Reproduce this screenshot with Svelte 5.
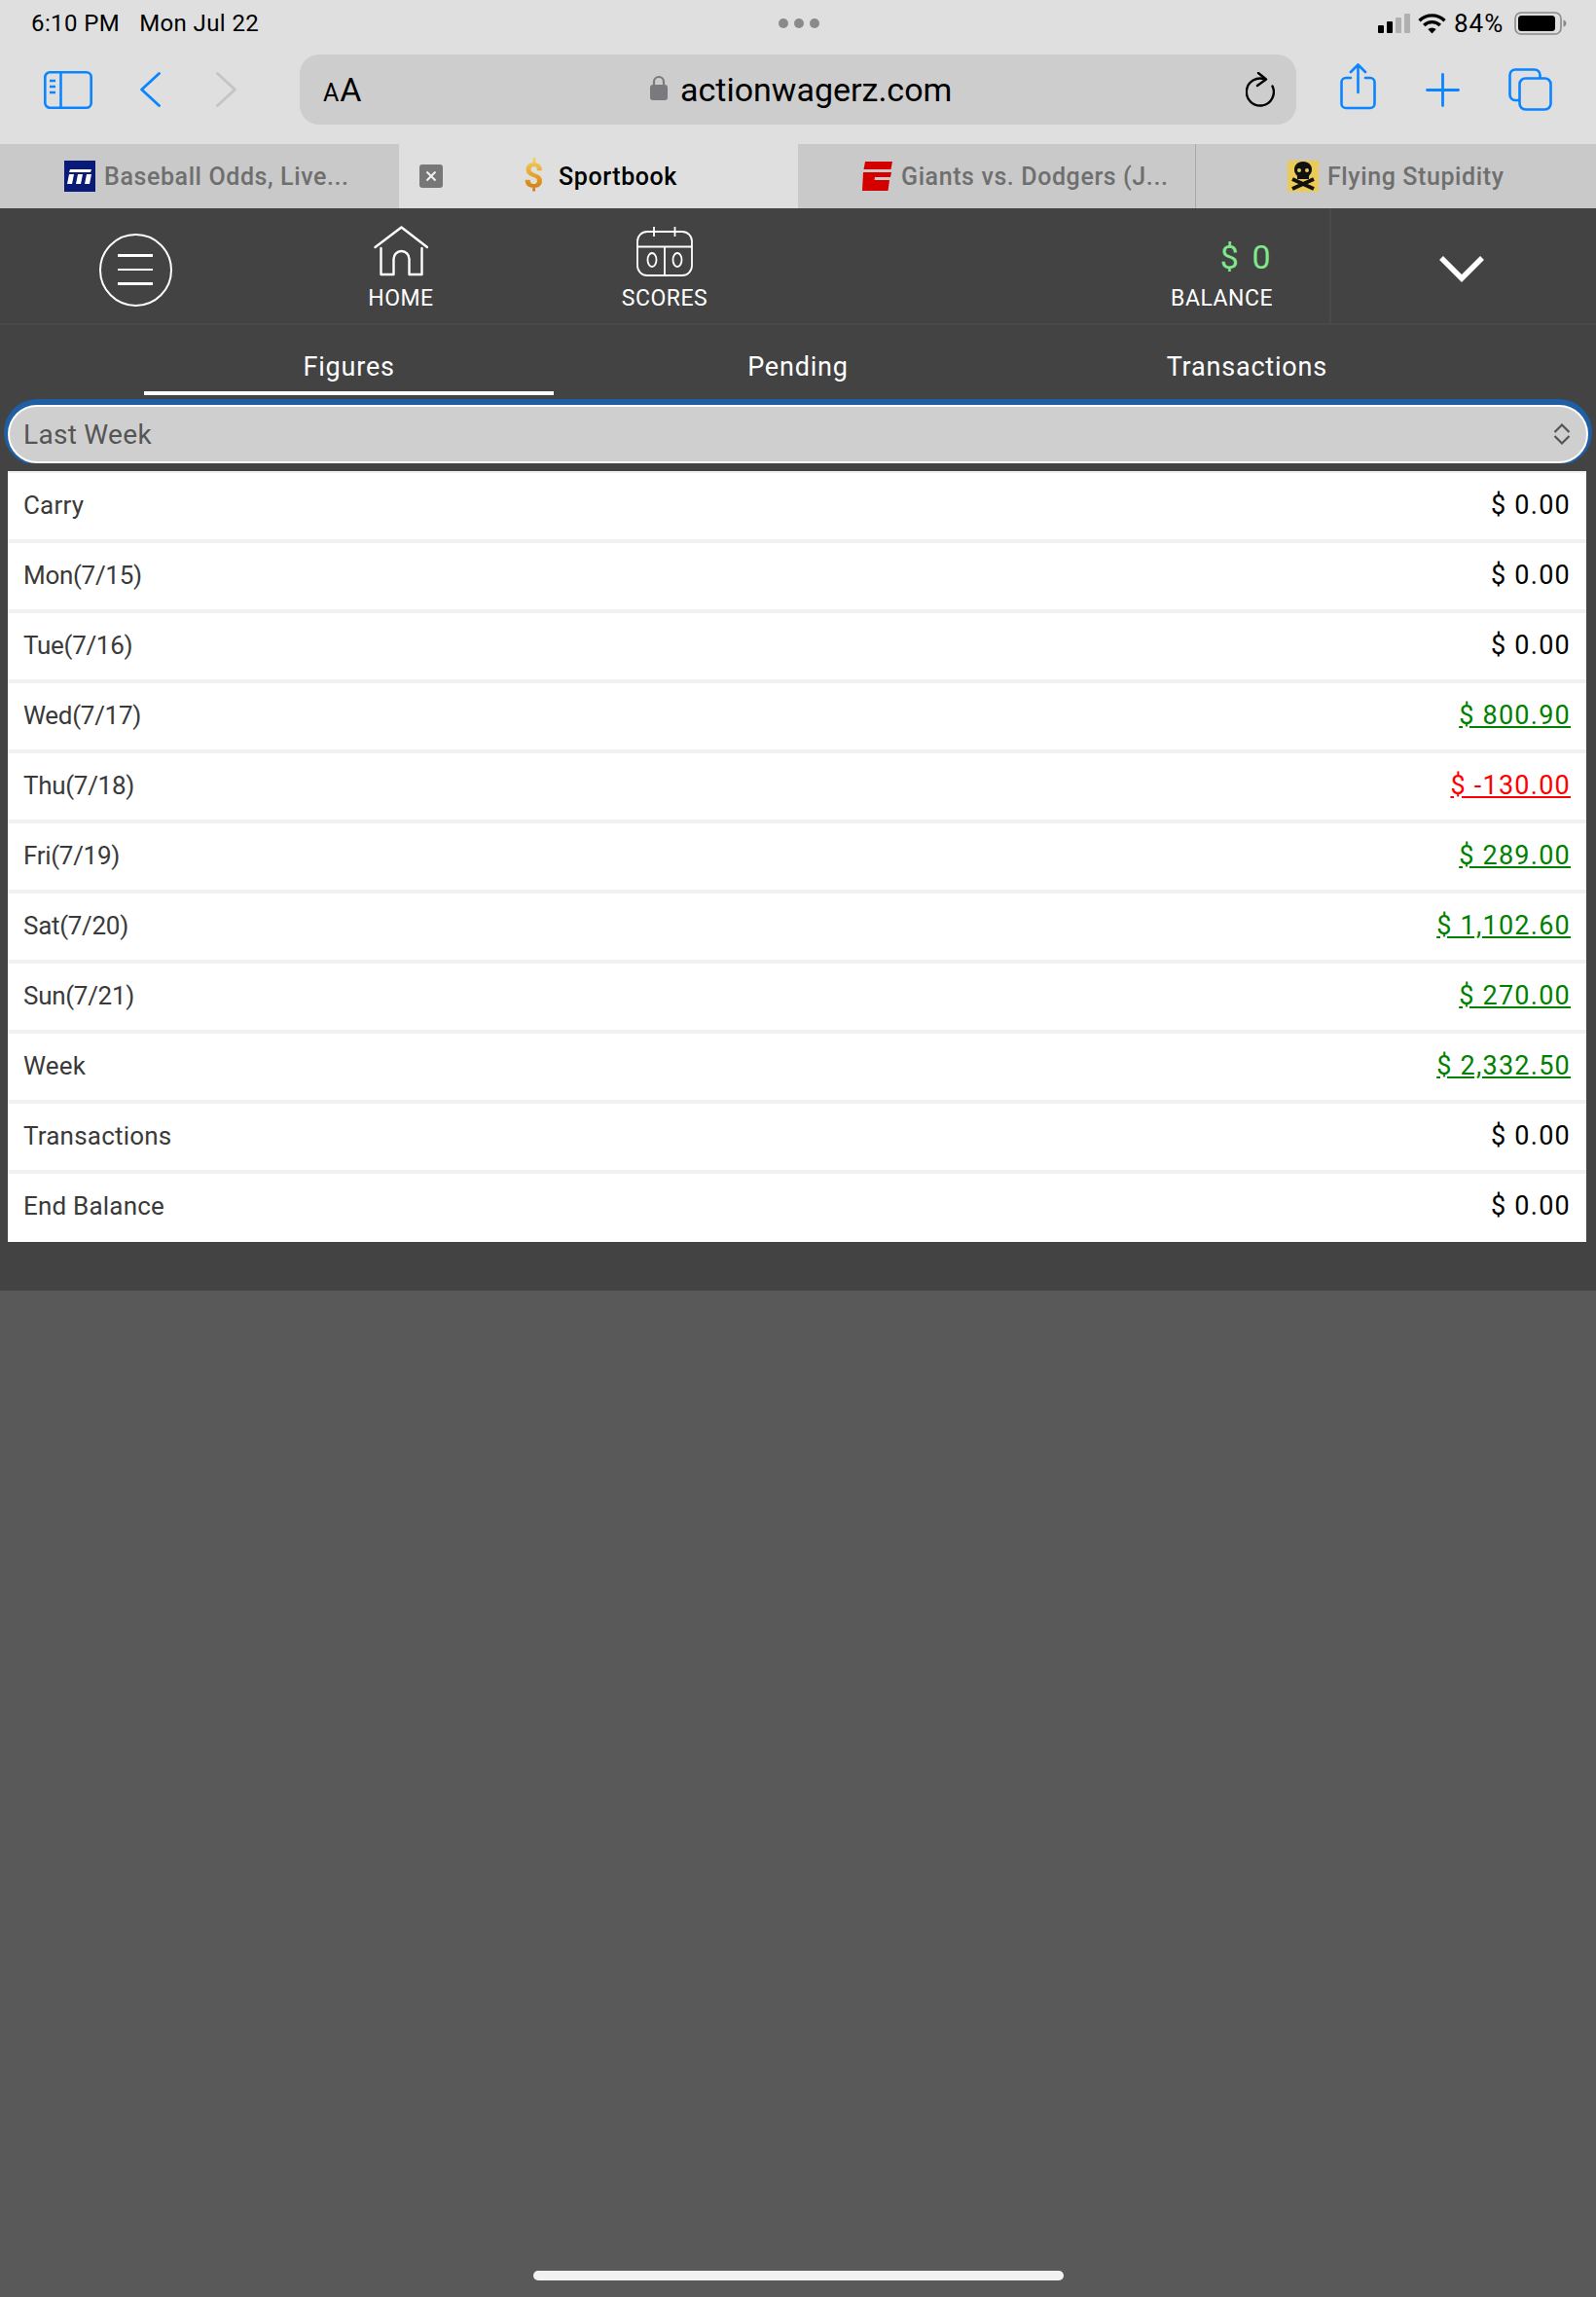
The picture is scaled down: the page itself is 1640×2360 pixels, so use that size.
<script>
  const rows = [
    ['Carry', '$ 0.00', ''],
    ['Mon(7/15)', '$ 0.00', ''],
    ['Tue(7/16)', '$ 0.00', ''],
    ['Wed(7/17)', '$ 800.90', 'pos'],
    ['Thu(7/18)', '$ -130.00', 'neg'],
    ['Fri(7/19)', '$ 289.00', 'pos'],
    ['Sat(7/20)', '$ 1,102.60', 'pos'],
    ['Sun(7/21)', '$ 270.00', 'pos'],
    ['Week', '$ 2,332.50', 'pos'],
    ['Transactions', '$ 0.00', ''],
    ['End Balance', '$ 0.00', '']
  ];
</script>

<div class="page">
  <header class="chrome">
    <div class="status">
      <div class="clock"><span>6:10 PM</span><span>Mon Jul 22</span></div>
      <div class="dots"><i></i><i></i><i></i></div>
      <div class="sys">
        <svg class="signal" width="33" height="20" viewBox="0 0 33 20"><rect x="0" y="12" width="6" height="8" rx="1" fill="#000"/><rect x="9" y="8" width="6" height="12" rx="1" fill="#000"/><rect x="18" y="4" width="6" height="16" rx="1" fill="#b0b0b0"/><rect x="27" y="0" width="6" height="20" rx="1" fill="#b0b0b0"/></svg>
        <svg class="wifi" width="29" height="21" viewBox="0 0 29 21" fill="none" stroke="#000" stroke-width="3.4"><path d="M1.500 7.200a18.500 18.500 0 0 1 26 0"/><path d="M6.200 12a11.800 11.800 0 0 1 16.600 0"/><path d="M14.500 20.500l-4.200-4.400a6 6 0 0 1 8.400 0z" fill="#000" stroke="none"/></svg>
        <span class="pct">84%</span>
        <svg class="batt" width="54" height="24" viewBox="0 0 54 24"><rect x="1" y="1" width="47" height="22" rx="6" fill="none" stroke="#8a8a8a" stroke-width="1.6"/><rect x="4" y="4" width="38" height="16" rx="3.5" fill="#000"/><path d="M50.500 8.500c2 .5 3 2 3 3.500s-1 3-3 3.500z" fill="#8a8a8a"/></svg>
      </div>
    </div>

    <div class="toolbar">
      <svg class="i-side" width="50" height="39" viewBox="0 0 50 39" fill="none" stroke="#0a84ff" stroke-width="2.6"><rect x="1.300" y="1.300" width="47.400" height="36.400" rx="5"/><path d="M17.500 1.300v36.400"/><path d="M6 10h6M6 16h6M6 22h6"/></svg>
      <svg class="i-back" width="21" height="36" viewBox="0 0 21 36" fill="none" stroke="#0a84ff" stroke-width="2.8" stroke-linecap="round" stroke-linejoin="round"><path d="M19.500 1.500L1.600 18l17.900 16.500"/></svg>
      <svg class="i-fwd" width="21" height="36" viewBox="0 0 21 36" fill="none" stroke="#c4c4c4" stroke-width="2.8" stroke-linecap="round" stroke-linejoin="round"><path d="M1.500 1.500L19.400 18 1.500 34.500"/></svg>
      <div class="url">
        <span class="aa"><small>A</small>A</span>
        <div class="addr">
          <svg width="18" height="26" viewBox="0 0 18 26"><path d="M4 12V7a5 5 0 0 1 10 0v5" fill="none" stroke="#7a7a7e" stroke-width="2.2"/><rect x="0" y="10" width="18" height="16" rx="3" fill="#7a7a7e"/></svg>
          <span>actionwagerz.com</span>
        </div>
        <svg class="reload" width="30" height="37" viewBox="0 0 30 37" fill="none" stroke="#000" stroke-width="2.4" stroke-linecap="round" stroke-linejoin="round"><path d="M20 7.500A14 14 0 1 0 27.500 14.500"/><path d="M13 1l8 6.500-9 6.500"/></svg>
      </div>
      <svg class="i-share" width="37" height="48" viewBox="0 0 37 48" fill="none" stroke="#0a84ff" stroke-width="2.6" stroke-linecap="round" stroke-linejoin="round"><path d="M11 15H6a4.500 4.500 0 0 0-4.500 4.500v22A4.500 4.500 0 0 0 6 46h25a4.500 4.500 0 0 0 4.500-4.500v-22A4.500 4.500 0 0 0 31 15h-5"/><path d="M18.500 30V2M11 9l7.500-7.500L26 9"/></svg>
      <svg class="i-plus" width="35" height="35" viewBox="0 0 35 35" fill="none" stroke="#0a84ff" stroke-width="2.8" stroke-linecap="round"><path d="M17.500 1.500v32M1.500 17.500h32"/></svg>
      <svg class="i-tabs" width="45" height="44" viewBox="0 0 45 44" fill="none" stroke="#0a84ff" stroke-width="2.6"><rect x="11.500" y="10.500" width="32" height="32" rx="6"/><path d="M11.500 33H7a5.500 5.500 0 0 1-5.500-5.500V7A5.500 5.500 0 0 1 7 1.500h20A5.500 5.500 0 0 1 32.500 7v3.500"/></svg>
    </div>

    <div class="tabs">
      <div class="tab t1">
        <svg width="32" height="32" viewBox="0 0 32 32"><rect width="32" height="32" fill="#0a1a78"/><path d="M6 9h22l-1 3H5zM5 14h5l-2 10H3zM14 14h5l-2 10h-5zM23 14h5l-2 10h-5z" fill="#fff"/></svg>
        <span>Baseball Odds, Live...</span>
      </div>
      <div class="tab t2">
        <span class="close"><svg width="12" height="12" viewBox="0 0 12 12" stroke="#f2f2f2" stroke-width="2"><path d="M1.500 1.500l9 9M10.500 1.500l-9 9"/></svg></span>
        <span class="coin">$</span>
        <span class="active">Sportbook</span>
      </div>
      <div class="tab t3">
        <svg width="31" height="30" viewBox="0 0 31 30"><path d="M3 0h28l-1.500 8H1.500zM1 11h29l-1 5H13l-.5 3H28l-1.500 11H0z" fill="#d40000"/></svg>
        <span>Giants vs. Dodgers (J...</span>
      </div>
      <div class="tab t4">
        <svg width="32" height="32" viewBox="0 0 32 32"><rect width="32" height="32" fill="#ecca57"/><path d="M16 1c6 0 9 4 9 8s-2 5-3 7v3H10v-3c-1-2-3-3-3-7s3-8 9-8z" fill="#111"/><circle cx="12" cy="10" r="2" fill="#ecca57"/><circle cx="20" cy="10" r="2" fill="#ecca57"/><path d="M5 19l22 10M27 19L5 29" stroke="#111" stroke-width="4"/></svg>
        <span>Flying Stupidity</span>
      </div>
    </div>
  </header>

  <section class="app">
    <nav class="nav">
      <div class="cell menu">
        <div class="burger"><i></i><i></i><i></i></div>
      </div>
      <div class="cell home">
        <svg width="56" height="52" viewBox="0 0 56 52" fill="none" stroke="#fff" stroke-width="2.4" stroke-linejoin="round" stroke-linecap="round"><path d="M1.500 22L28.500 1.500 55 22"/><path d="M7.500 23v27h13V34a8 8 0 0 1 16 0v16h13V23"/></svg>
        <span>HOME</span>
      </div>
      <div class="cell scores">
        <svg width="58" height="52" viewBox="0 0 58 52" fill="none" stroke="#fff" stroke-width="1.8"><rect x="1" y="6" width="56" height="45" rx="10"/><path d="M1 21.500h56M29 21.500V51M18 1v10M39.500 1v10"/><ellipse cx="16" cy="35" rx="4.500" ry="7"/><ellipse cx="42" cy="35" rx="4.500" ry="7"/></svg>
        <span>SCORES</span>
      </div>
      <div class="grow"></div>
      <div class="cell bal">
        <div class="amt">$ 0</div>
        <span>BALANCE</span>
      </div>
      <div class="cell chev">
        <svg width="46" height="28" viewBox="0 0 46 28" fill="none" stroke="#fff" stroke-width="5.5"><path d="M2 3l21 21L44 3"/></svg>
      </div>
    </nav>

    <div class="subtabs">
      <div class="sub on"><span>Figures</span></div>
      <div class="sub"><span>Pending</span></div>
      <div class="sub"><span>Transactions</span></div>
    </div>

    <div class="selwrap">
      <div class="select">
        <span>Last Week</span>
        <svg width="18" height="22" viewBox="0 0 18 22" fill="none" stroke="#555" stroke-width="2.2"><path d="M1.500 9L9 1.500 16.500 9M1.500 13L9 20.500 16.500 13"/></svg>
      </div>
    </div>

    <div class="table">
      {#each rows as [label, value, kind]}
        <div class="row">
          <span class="label" class:date={label.includes('(')}>{label}</span>
          <span class="val {kind}">{value}</span>
        </div>
      {/each}
    </div>
  </section>

  <div class="rest">
    <div class="homebar"></div>
  </div>
</div>

<style>
  :global(body) { margin: 0; background: #595959; }
  .page { width: 1640px; height: 2360px; display: flex; flex-direction: column; font-family: Roboto, sans-serif; overflow: hidden; }

  .chrome { background: #dfdfdf; height: 214px; flex: none; }
  .status { height: 48px; display: grid; grid-template-columns: 1fr auto 1fr; align-items: center; padding: 0 30px 0 32px; color: #000; font-size: 24px; }
  .clock { display: flex; gap: 20px; letter-spacing: .4px; }
  .dots { display: flex; gap: 6px; }
  .dots i { width: 10px; height: 10px; border-radius: 50%; background: #8a8a8a; }
  .sys { display: flex; align-items: center; justify-content: flex-end; }
  .wifi { margin-left: 8px; }
  .pct { margin-left: 8px; width: 54px; font-size: 26px; letter-spacing: 1px; white-space: nowrap; }
  .batt { margin-left: 8px; }

  .toolbar { height: 100px; display: flex; align-items: center; padding: 0 0 12px 45px; box-sizing: border-box; }
  .i-back { margin-left: 49px; }
  .i-fwd { margin-left: 57px; }
  .url { margin-left: 65px; width: 1024px; height: 72px; border-radius: 20px; background: #cdcdcd; display: flex; align-items: center; padding: 0 22px 0 24px; box-sizing: border-box; }
  .aa { font-size: 34px; color: #000; line-height: 1; width: 40px; }
  .aa small { font-size: 25px; margin-right: 1px; }
  .addr { display: flex; align-items: center; gap: 13px; font-size: 34px; color: #000; margin-left: 296px; }
  .addr svg { margin-top: -4px; }
  .reload { margin-left: auto; }
  .i-share { margin-left: 45px; margin-top: -6px; }
  .i-plus { margin-left: 51px; }
  .i-tabs { margin-left: 50px; }

  .tabs { height: 66px; display: grid; grid-template-columns: 410px 410px 409px 411px; }
  .tab { display: flex; align-items: center; background: #c9c9c9; color: #6f6f6f; font-size: 25px; font-weight: 500; letter-spacing: .6px; padding-left: 66px; gap: 9px; box-sizing: border-box; white-space: nowrap; }
  .t2 { background: #dfdfdf; padding-left: 21px; gap: 0; }
  .t3 { border-right: 1px solid #a9a9a9; }
  .t4 { padding-left: 94px; }
  .close { width: 24px; height: 24px; border-radius: 3px; background: #777; display: flex; align-items: center; justify-content: center; }
  .coin { margin-left: 83px; width: 36px; font-size: 36px; font-weight: 700; line-height: 38px; background: linear-gradient(#f3d465, #e39a22 55%, #c96f12); -webkit-background-clip: text; background-clip: text; color: transparent; }
  .active { color: #000; }

  .app { background: #434343; height: 1112px; flex: none; }
  .nav { height: 120px; display: flex; border-bottom: 2px solid #4a4a4a; box-sizing: border-box; color: #fff; font-size: 23px; letter-spacing: .5px; }
  .cell { display: flex; flex-direction: column; align-items: center; }
  .cell span { line-height: 20px; }
  .menu { width: 278px; justify-content: center; padding-top: 8px; box-sizing: border-box; }
  .burger { width: 75px; height: 75px; border: 2.5px solid #fff; border-radius: 50%; box-sizing: border-box; display: flex; flex-direction: column; align-items: center; justify-content: center; gap: 12px; }
  .burger i { width: 36px; height: 2.5px; background: #fff; display: block; }
  .home { width: 268px; padding-top: 18px; gap: 13px; box-sizing: border-box; }
  .scores { width: 274px; padding-top: 18px; gap: 13px; box-sizing: border-box; }
  .grow { flex: 1; }
  .bal { width: 260px; align-items: flex-end; padding: 32px 58px 0 0; box-sizing: border-box; border-right: 2px solid #4a4a4a; }
  .amt { color: #7fe88a; font-size: 34px; line-height: 36px; margin-bottom: 15px; letter-spacing: 2.5px; }
  .chev { width: 272px; padding: 48px 4px 0 0; justify-content: flex-start; box-sizing: border-box; }

  .subtabs { height: 76px; padding: 0 128px; display: grid; grid-template-columns: repeat(3, 1fr); color: #fff; font-size: 27px; letter-spacing: .8px; line-height: 32px; align-items: start; }
  .sub { text-align: center; margin: 0 20px; padding-top: 27px; height: 41px; border-bottom: 4px solid transparent; }
  .sub.on { border-bottom-color: #fff; }

  .selwrap { height: 66px; padding: 6px 10px 0; box-sizing: border-box; overflow: hidden; }
  .select { height: 60px; margin: 0 -2px; background: #cfcfcf; border: 2px solid #fff; border-radius: 30px; box-shadow: 0 -2px 0 4px #1f5ea3; box-sizing: border-box; display: flex; align-items: center; justify-content: space-between; padding: 0 16px 0 14px; color: #555; font-size: 28px; letter-spacing: .3px; }

  .table { margin: 8px 10px 0 8px; background: #f0f0f0; padding-top: 2px; display: flex; flex-direction: column; gap: 4px; }
  .row { height: 68px; box-sizing: border-box; background: #fff; display: flex; align-items: center; justify-content: space-between; padding: 0 16px 2px 16px; font-size: 26px; }
  .row:last-child { height: 70px; padding-bottom: 4px; }
  .label { color: #3a3a3a; letter-spacing: .2px; }
  .label.date { letter-spacing: -.3px; }
  .val { color: #000; font-size: 27px; letter-spacing: 1.25px; }
  .val.pos { color: #008000; text-decoration: underline; }
  .val.neg { color: #f00; text-decoration: underline; }

  .rest { flex: 1; background: #595959; display: flex; justify-content: center; align-items: flex-end; padding-bottom: 17px; }
  .homebar { width: 545px; height: 10px; border-radius: 5px; background: #f2f2f2; }
</style>
